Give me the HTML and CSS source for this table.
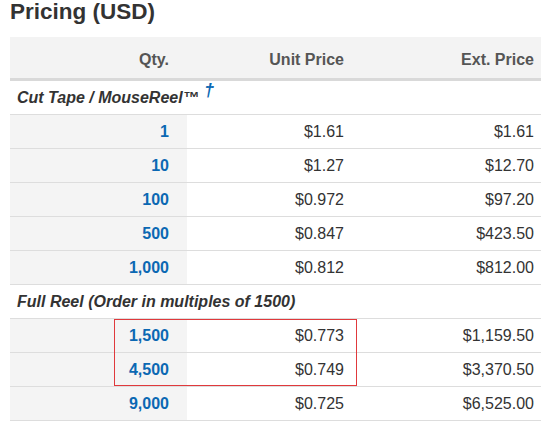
FILE: index.html
```html
<!DOCTYPE html>
<html lang="en">
<head>
<meta charset="utf-8">
<title>Pricing (USD)</title>
<link rel="stylesheet" href="styles.css">
</head>
<body>
<div class="page">
  <h1 class="title">Pricing (USD)</h1>
  <div class="table-wrap">
    <table class="pricing">
      <colgroup>
        <col class="c-qty">
        <col class="c-unit">
        <col class="c-ext">
      </colgroup>
      <thead>
        <tr>
          <th class="qty">Qty.</th>
          <th class="unit">Unit Price</th>
          <th class="ext">Ext. Price</th>
        </tr>
      </thead>
      <tbody>
        <tr class="section">
          <td colspan="3">Cut Tape / MouseReel™ <span class="dagger">†</span></td>
        </tr>
        <tr><td class="qty">1</td><td class="unit">$1.61</td><td class="ext">$1.61</td></tr>
        <tr><td class="qty">10</td><td class="unit">$1.27</td><td class="ext">$12.70</td></tr>
        <tr><td class="qty">100</td><td class="unit">$0.972</td><td class="ext">$97.20</td></tr>
        <tr><td class="qty">500</td><td class="unit">$0.847</td><td class="ext">$423.50</td></tr>
        <tr><td class="qty">1,000</td><td class="unit">$0.812</td><td class="ext">$812.00</td></tr>
        <tr class="section">
          <td colspan="3">Full Reel (Order in multiples of 1500)</td>
        </tr>
        <tr><td class="qty">1,500</td><td class="unit">$0.773</td><td class="ext">$1,159.50</td></tr>
        <tr><td class="qty">4,500</td><td class="unit">$0.749</td><td class="ext">$3,370.50</td></tr>
        <tr><td class="qty">9,000</td><td class="unit">$0.725</td><td class="ext">$6,525.00</td></tr>
      </tbody>
    </table>
    <div class="highlight"></div>
  </div>
</div>
</body>
</html>
```

FILE: styles.css
```css
html, body {
  margin: 0;
  padding: 0;
  background: #ffffff;
}

body {
  font-family: "Liberation Sans", Arial, sans-serif;
  color: #333333;
}

.page {
  padding: 0 18px 0 10px;
}

.title {
  margin: 0 0 14px 0;
  font-size: 22.5px;
  line-height: 23px;
  font-weight: bold;
  color: #333333;
}

.table-wrap {
  position: relative;
  width: 531px;
}

.pricing {
  width: 531px;
  table-layout: fixed;
  border-collapse: separate;
  border-spacing: 0;
  font-size: 16px;
  line-height: 18px;
}

.c-qty { width: 177px; }
.c-unit { width: 169px; }
.c-ext { width: 185px; }

.pricing th {
  background: #f3f3f3;
  color: #555555;
  font-weight: bold;
  text-align: right;
  padding: 14px 0 9px 0;
  border-bottom: 3px solid #d9d9d9;
}

.pricing td {
  padding: 8px 0 7px 0;
  border-bottom: 1px solid #dddddd;
  text-align: right;
  color: #333333;
}

.pricing .qty { padding-right: 18px; }
.pricing .unit { padding-right: 12px; }
.pricing .ext { padding-right: 7px; }

.pricing td.qty {
  background: #f4f4f4;
  color: #0b68b3;
  font-weight: bold;
}

.pricing .section td {
  text-align: left;
  padding-left: 7px;
  font-weight: bold;
  font-style: italic;
  color: #333333;
  background: #ffffff;
}

.dagger {
  color: #0b68b3;
  font-size: 18px;
  vertical-align: 7px;
  line-height: 0;
  margin-left: 1px;
}

.highlight {
  position: absolute;
  left: 104px;
  top: 282px;
  width: 241px;
  height: 65px;
  border: 1px solid #e0393c;
  pointer-events: none;
}
```
